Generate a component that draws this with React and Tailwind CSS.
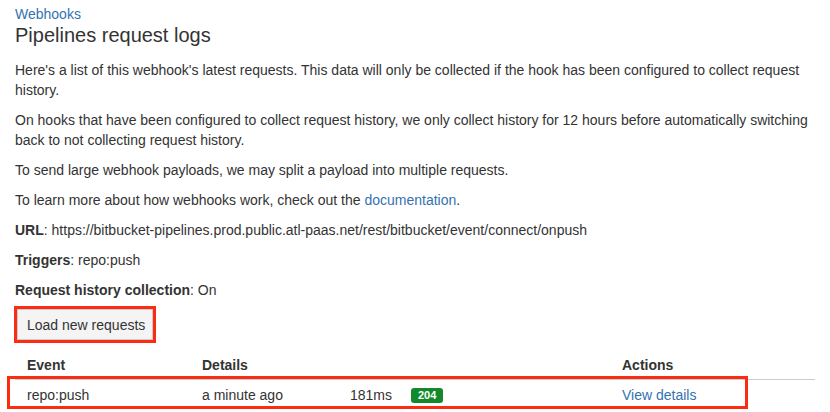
import React from 'react';

const rows = [
  { event: 'repo:push', when: 'a minute ago', time: '181ms', status: '204' }
];

const App = () => {
  return (
    <div className="w-[830px] h-[412px] overflow-hidden bg-white px-[15px] pt-[4px] text-[14px] leading-[20px] text-[#333333] font-['Liberation_Sans',Arial,sans-serif]">
      {/* Breadcrumb + title */}
      <a href="#" className="block text-[#3572b0]">Webhooks</a>
      <h1 className="text-[20px] leading-[22px] font-normal text-[#333333]">Pipelines request logs</h1>

      {/* Description */}
      <p className="mt-[14px]">
        Here's a list of this webhook's latest requests. This data will only be collected if the hook has been configured to collect request history.
      </p>
      <p className="mt-[10px]">
        On hooks that have been configured to collect request history, we only collect history for 12 hours before automatically switching back to not collecting request history.
      </p>
      <p className="mt-[10px]">To send large webhook payloads, we may split a payload into multiple requests.</p>
      <p className="mt-[10px]">
        To learn more about how webhooks work, check out the{' '}
        <a href="#" className="text-[#3572b0]">documentation</a>.
      </p>
      <p className="mt-[10px]">
        <span className="font-bold">URL</span>: https://bitbucket-pipelines.prod.public.atl-paas.net/rest/bitbucket/event/connect/onpush
      </p>
      <p className="mt-[10px]">
        <span className="font-bold">Triggers</span>: repo:push
      </p>
      <p className="mt-[10px]">
        <span className="font-bold">Request history collection</span>: On
      </p>

      {/* Load button (highlighted) */}
      <div className="mt-[6px] ml-[-1px] inline-block border-[3px] border-[#fb2c12]">
        <button className="h-[31px] pl-[9px] pr-[7px] bg-[#f4f4f4] border border-[#cccccc] text-[14px] leading-[20px] text-[#333333]">
          Load new requests
        </button>
      </div>

      {/* Request table */}
      <div className="mt-[7px] w-[800px]">
        <div className="flex h-[30px] items-center border-b border-[#cccccc] font-bold">
          <div className="w-[175px] pl-[12px]">Event</div>
          <div className="w-[420px] pl-[12px]">Details</div>
          <div className="flex-1 pl-[12px]">Actions</div>
        </div>
        {rows.map((r, i) => (
          <div key={i} className="relative flex h-[30px] items-center">
            <div className="w-[175px] pl-[12px]">{r.event}</div>
            <div className="w-[420px] pl-[12px] flex items-center">
              <span className="w-[148px]">{r.when}</span>
              <span className="w-[61px]">{r.time}</span>
              <span className="h-[15px] px-[7px] rounded-[3px] bg-[#14892c] text-white text-[11px] leading-[15px] font-bold">
                {r.status}
              </span>
            </div>
            <div className="flex-1 pl-[12px]">
              <a href="#" className="text-[#3572b0]">View details</a>
            </div>
            {/* highlight annotation */}
            <div className="absolute left-[-8px] top-[-4px] w-[741px] h-[33px] border-[3px] border-[#fb2c12] pointer-events-none" />
          </div>
        ))}
      </div>
    </div>
  );
};

export default App;
